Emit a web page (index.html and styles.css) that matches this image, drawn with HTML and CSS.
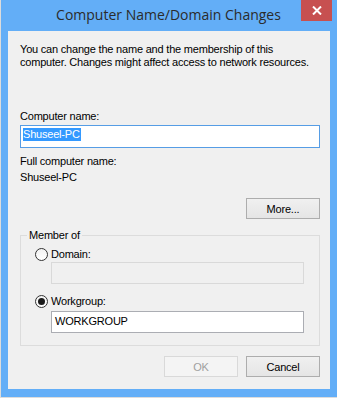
FILE: index.html
```html
<!DOCTYPE html>
<html lang="en">
<head>
    <meta charset="UTF-8">
    <title>Computer Name/Domain Changes</title>
    <link rel="stylesheet" href="styles.css">
</head>
<body>
    <div class="window">
        <div class="titlebar">
            <span class="title">Computer Name/Domain Changes</span>
            <button class="close-btn">
                <svg width="10" height="9" viewBox="0 0 10 9">
                    <path d="M1 0.5 L9 8.5 M9 0.5 L1 8.5" stroke="#fff" stroke-width="2"/>
                </svg>
            </button>
        </div>
        <div class="content">
            <p class="intro">You can change the name and the membership of this<br>computer. Changes might affect access to network resources.</p>

            <div class="label first">Computer name:</div>
            <div class="textbox focused"><span class="selected">Shuseel-PC</span></div>

            <div class="label full">Full computer name:</div>
            <div class="value">Shuseel-PC</div>

            <div class="more-row">
                <button class="btn">More...</button>
            </div>

            <fieldset class="member">
                <legend>Member of</legend>
                <div class="radio-row">
                    <span class="radio"></span>
                    <span>Domain:</span>
                </div>
                <div class="textbox sub disabled"></div>

                <div class="radio-row second">
                    <span class="radio checked"></span>
                    <span>Workgroup:</span>
                </div>
                <div class="textbox sub wg">WORKGROUP</div>
            </fieldset>

            <div class="buttons">
                <button class="btn" disabled>OK</button>
                <button class="btn">Cancel</button>
            </div>
        </div>
    </div>
</body>
</html>
```

FILE: styles.css
```css
body {
    margin: 0;
    background: #dcdcdc;
    font-family: "Liberation Sans", Arial, sans-serif;
    font-size: 11px;
    line-height: 13px;
    letter-spacing: -0.2px;
    color: #000;
}
.window {
    margin-left: 1px;
    width: 336px;
    height: 397px;
    background: #63aef7;
}
.titlebar {
    position: relative;
    height: 31px;
    text-align: center;
}
.title {
    display: inline-block;
    padding-top: 6px;
    padding-right: 1px;
    font-family: "Open Sans", "Noto Sans", sans-serif;
    font-size: 14px;
    line-height: 18px;
    letter-spacing: 0;
    color: #2b2b2b;
}
.close-btn {
    position: absolute;
    top: 0;
    right: 5px;
    width: 31px;
    height: 21px;
    padding: 0;
    border: none;
    background: #c75050;
    display: flex;
    align-items: center;
    justify-content: center;
}
.content {
    margin-left: 7px;
    width: 322px;
    height: 358px;
    box-sizing: border-box;
    padding: 12px 10px 0 12px;
    background: #f0f0f0;
}
.intro {
    margin: 0;
    white-space: nowrap;
}
.label.first {
    margin-top: 41px;
}
.label.full {
    margin-top: 7px;
}
.value {
    margin-top: 3px;
}
.textbox {
    box-sizing: border-box;
    height: 22px;
    border: 1px solid #abadb3;
    background: #fff;
    padding: 3px 3px 0;
}
.textbox.focused {
    height: 23px;
    margin-top: 2px;
    padding: 2px 2px 0;
    border-color: #569de5;
}
.selected {
    display: inline-block;
    background: #3399ff;
    color: #fff;
    padding-right: 1px;
}
.more-row {
    margin-top: 14px;
    display: flex;
    justify-content: flex-end;
}
.btn {
    box-sizing: border-box;
    width: 74px;
    height: 21px;
    padding: 0;
    border: 1px solid #adadad;
    background: linear-gradient(#f0f0f0, #e5e5e5);
    font-family: inherit;
    font-size: 11px;
    letter-spacing: -0.2px;
    color: #000;
}
.btn:disabled {
    border-color: #d9d9d9;
    background: #f4f4f4;
    color: #a0a0a0;
}
.member {
    margin: 10px 0 0;
    padding: 0 15px 12px 14px;
    border: 1px solid #dcdcdc;
}
.member legend {
    margin-left: -8px;
    padding: 0 2px;
}
.radio-row {
    margin-top: 6px;
    display: flex;
    align-items: center;
    gap: 3px;
    height: 13px;
}
.radio-row.second {
    margin-top: 11px;
}
.radio {
    position: relative;
    box-sizing: border-box;
    width: 13px;
    height: 13px;
    border: 1px solid #333;
    border-radius: 50%;
    background: linear-gradient(#f2f2f2, #ffffff);
}
.radio.checked::after {
    content: "";
    position: absolute;
    left: 2px;
    top: 2px;
    width: 7px;
    height: 7px;
    border-radius: 50%;
    background: #1a1a1a;
}
.textbox.sub {
    margin-left: 16px;
    width: 253px;
    margin-top: 1px;
}
.textbox.disabled {
    border-color: #d9d9d9;
    background: #f0f0f0;
}
.textbox.wg {
    margin-top: 3px;
}
.buttons {
    margin-top: 10px;
    display: flex;
    justify-content: flex-end;
    gap: 8px;
}
```
